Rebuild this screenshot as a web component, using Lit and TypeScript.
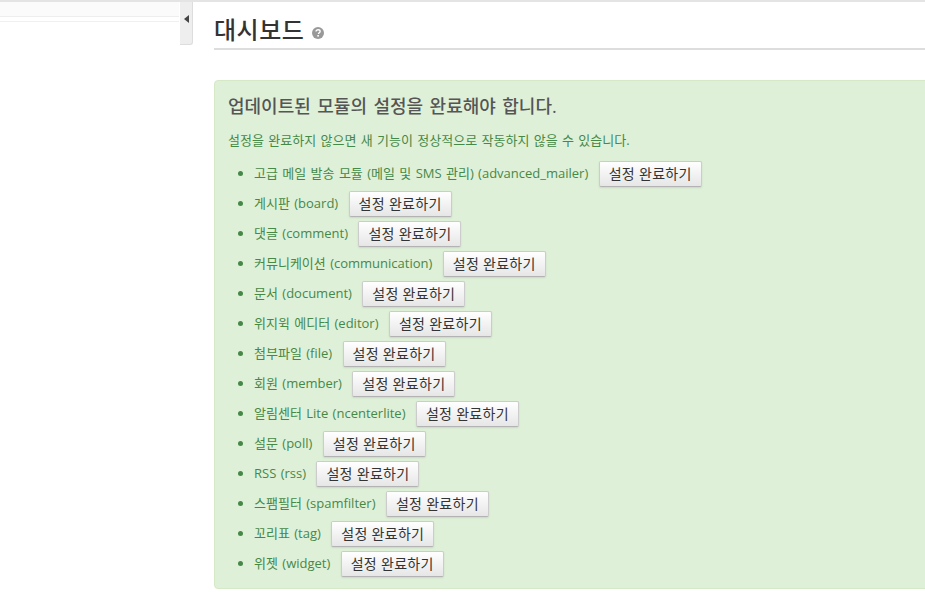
import { LitElement, html, css } from 'lit';
import { customElement } from 'lit/decorators.js';

const MODULES = [
  '고급 메일 발송 모듈 (메일 및 SMS 관리) (advanced_mailer)',
  '게시판 (board)',
  '댓글 (comment)',
  '커뮤니케이션 (communication)',
  '문서 (document)',
  '위지윅 에디터 (editor)',
  '첨부파일 (file)',
  '회원 (member)',
  '알림센터 Lite (ncenterlite)',
  '설문 (poll)',
  'RSS (rss)',
  '스팸필터 (spamfilter)',
  '꼬리표 (tag)',
  '위젯 (widget)',
];

@customElement('app-root')
export class AppRoot extends LitElement {
  static styles = css`
    :host {
      display: block;
      width: 925px;
      height: 595px;
      overflow: hidden;
      background: #fff;
      border-top: 2px solid #e4e4e4;
      box-sizing: border-box;
      font-family: 'Open Sans', 'Noto Sans CJK KR', sans-serif;
      color: #333;
    }
    .layout {
      display: flex;
      align-items: flex-start;
    }
    .sidebar {
      flex: none;
      width: 193px;
      display: flex;
      align-items: flex-start;
    }
    .nav {
      flex: none;
      width: 179px;
      margin-right: 1px;
      height: 14px;
      background: #fbfbfb;
      border-bottom: 1px solid #eee;
    }
    .nav-line {
      height: 1px;
      margin-top: 19px;
      background: #f0f0f0;
    }
    .toggle {
      flex: none;
      width: 13px;
      height: 43px;
      background: #eee;
      border-right: 1px solid #ddd;
      border-bottom: 1px solid #ddd;
      border-bottom-right-radius: 3px;
      box-sizing: border-box;
      display: flex;
      justify-content: center;
      padding-top: 13px;
    }
    .toggle i {
      width: 0;
      height: 0;
      border-top: 4px solid transparent;
      border-bottom: 4px solid transparent;
      border-right: 5px solid #444;
    }
    .main {
      flex: none;
      width: 720px;
      margin-left: 21px;
    }
    .title {
      height: 48px;
      border-bottom: 2px solid #ddd;
      box-sizing: border-box;
      display: flex;
      align-items: center;
      gap: 8px;
      padding: 12px 0 2px;
      margin: 0;
      font-size: 24px;
      font-weight: 500;
      line-height: 34px;
      letter-spacing: 0.5px;
      color: #333;
    }
    .title svg {
      margin-top: 5px;
    }
    .alert {
      margin-top: 30px;
      height: 509px;
      box-sizing: border-box;
      padding: 12px 13px;
      background: #dff0d8;
      border: 1px solid #d6e9c6;
      border-radius: 4px;
      color: #468847;
      font-size: 13px;
      word-spacing: 1px;
    }
    .alert h2 {
      margin: 0;
      font-size: 18px;
      font-weight: 500;
      line-height: 26px;
      word-spacing: 1.8px;
      color: #555;
    }
    .alert p {
      margin: 11px 0 0;
      line-height: 20px;
    }
    ul {
      margin: 10px 0 0;
      padding: 0 0 0 26px;
    }
    li {
      height: 30px;
      line-height: 26px;
    }
    li span {
      margin-right: 6px;
    }
    button {
      height: 26px;
      margin-top: 1px;
      padding: 0 9px;
      vertical-align: top;
      font: inherit;
      font-size: 14px;
      line-height: 22px;
      letter-spacing: 0.3px;
      color: #333;
      background: linear-gradient(#fff, #e6e6e6);
      border: 1px solid #ccc;
      border-bottom-color: #b3b3b3;
      border-radius: 2px;
      box-shadow: 0 1px 2px rgba(0, 0, 0, 0.1);
    }
  `;

  render() {
    return html`
      <div class="layout">
        <div class="sidebar">
          <div class="nav"><div class="nav-line"></div></div>
          <div class="toggle"><i></i></div>
        </div>
        <div class="main">
          <h1 class="title">
            대시보드
            <svg width="12" height="12" viewBox="0 0 12 12">
              <circle cx="6" cy="6" r="6" fill="#999"></circle>
              <path d="M4 4.6c0-1.2 1-1.9 2.1-1.9s2 .7 2 1.7c0 1.4-1.6 1.4-1.6 2.6" fill="none" stroke="#fff" stroke-width="1.4"></path>
              <rect x="5.3" y="8" width="1.6" height="1.6" fill="#fff"></rect>
            </svg>
          </h1>
          <div class="alert">
            <h2>업데이트된 모듈의 설정을 완료해야 합니다.</h2>
            <p>설정을 완료하지 않으면 새 기능이 정상적으로 작동하지 않을 수 있습니다.</p>
            <ul>
              ${MODULES.map((m) => html`<li><span>${m}</span> <button>설정 완료하기</button></li>`)}
            </ul>
          </div>
        </div>
      </div>
    `;
  }
}
